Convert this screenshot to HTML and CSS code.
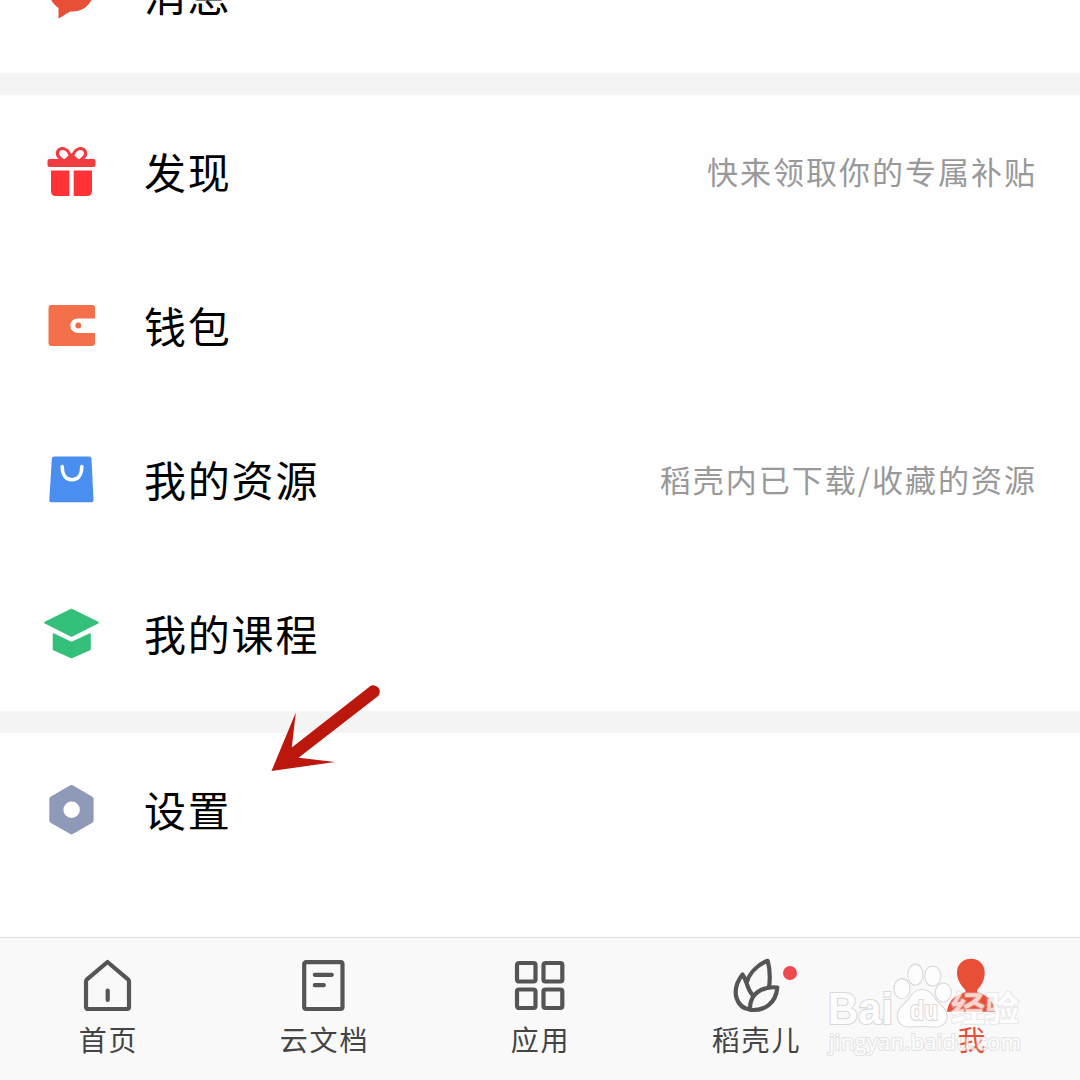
FILE: index.html
```html
<!DOCTYPE html>
<html lang="zh-CN">
<head>
<meta charset="utf-8">
<title>我</title>
<link rel="stylesheet" href="styles.css">
</head>
<body>
<div class="screen">
  <main class="content">
    <section class="group group-top">
      <div class="row">
        <svg class="row-icon" viewBox="0 0 60 60"><path fill="#e94f37" d="M29.500 0C16 0 6.500 9 6.500 22c0 9 3.500 15.500 10 20v10.500c4-1.500 7-5 12-7C42 46.500 52.500 36 52.500 22 52.500 9 43 0 29.500 0z"/></svg>
        <span class="row-label">消息</span>
      </div>
    </section>
    <section class="group">
      <div class="row">
        <svg class="row-icon" viewBox="0 0 60 60">
          <g fill="none" stroke="#f03c3e" stroke-width="3.200" stroke-linejoin="round"><path d="M29.500 17C28 11 24.500 6.500 20.500 6.500c-4.500 0-6.500 4.500-4 8 1 1.500 2.500 2.500 4 3.500M29.500 17C31 11 34.500 6.500 38.500 6.500c4.500 0 6.500 4.500 4 8-1 1.500-2.500 2.500-4 3.500M24 18l5.500-5 5.500 5"/></g>
          <rect x="5.500" y="17" width="48" height="8" rx="2" fill="#f03c3e"/>
          <path fill="#ff3335" d="M9 28.500h18.300V54H13.500a4.500 4.500 0 0 1-4.500-4.500zM31.700 28.500H50v21a4.500 4.500 0 0 1-4.500 4.500H31.700z"/>
        </svg>
        <span class="row-label">发现</span>
        <span class="row-hint">快来领取你的专属补贴</span>
      </div>
      <div class="row">
        <svg class="row-icon" viewBox="0 0 60 60"><path fill="#f4704a" d="M9.500 9h41a2.500 2.500 0 0 1 2.500 3v10.500H35.500a7.200 7.200 0 0 0 0 14.400H53V47a3 3 0 0 1-2.500 3h-41a3 3 0 0 1-3-3V12a3 3 0 0 1 3-3z"/><circle cx="36.300" cy="29.500" r="2.900" fill="#ee6a45"/></svg>
        <span class="row-label">钱包</span>
      </div>
      <div class="row">
        <svg class="row-icon" viewBox="0 0 60 60"><path fill="#4a8ff0" d="M12.500 6.500h34.500a2.500 2.500 0 0 1 2.500 2.500l2 41a2 2 0 0 1-2 2.200H9.300a2 2 0 0 1-2-2.200l2.500-41a2.500 2.500 0 0 1 2.700-2.500z"/><path fill="none" stroke="#fff" stroke-width="3.500" stroke-linecap="round" d="M20.200 16.500c0 8 3.500 13.300 9.800 13.300s9.800-5.300 9.800-13.300"/></svg>
        <span class="row-label">我的资源</span>
        <span class="row-hint">稻壳内已下载/收藏的资源</span>
      </div>
      <div class="row">
        <svg class="row-icon" viewBox="0 0 60 60"><g fill="#34c07b" stroke="#34c07b" stroke-linejoin="round" stroke-width="2"><path d="M29.500 5.700L3.200 18.700l26.300 13.100 26.300-13.100z"/><path d="M11.700 30.300L29.500 39l18.300-8.700v15L29.500 53.300 11.700 45.300z"/></g></svg>
        <span class="row-label">我的课程</span>
      </div>
    </section>
    <section class="group">
      <div class="row">
        <svg class="row-icon" viewBox="0 0 60 60"><path fill="#8f9ab8" stroke="#8f9ab8" stroke-width="5" stroke-linejoin="round" d="M29.500 7.500l19.600 11.300v21.800L29.500 51.900 9.800 40.600V18.800z"/><circle cx="29.600" cy="29.700" r="8.200" fill="#fff"/></svg>
        <span class="row-label">设置</span>
      </div>
    </section>
  </main>

  <nav class="tabbar">
    <a class="tab">
      <svg class="tab-icon" viewBox="0 0 60 60"><path d="M8 25.500a3 3 0 0 1 1-2.200L29.500 6 50 23.300a3 3 0 0 1 1 2.200V51a2 2 0 0 1-2 2H10a2 2 0 0 1-2-2zM29.700 34.500v9.500"/></svg>
      <span class="tab-label">首页</span>
    </a>
    <a class="tab">
      <svg class="tab-icon" viewBox="0 0 60 60"><rect x="10.200" y="6.200" width="38.300" height="46.800" rx="2"/><path d="M20.800 18.800h17M20.800 29.200h9"/></svg>
      <span class="tab-label">云文档</span>
    </a>
    <a class="tab">
      <svg class="tab-icon" viewBox="0 0 60 60"><rect x="7" y="7" width="18.500" height="18.500" rx="2"/><rect x="33.500" y="7" width="18.800" height="18.500" rx="2"/><rect x="7" y="33.500" width="18.500" height="18.500" rx="2"/><rect x="33.500" y="33.500" width="18.800" height="18.500" rx="2"/></svg>
      <span class="tab-label">应用</span>
    </a>
    <a class="tab">
      <svg class="tab-icon" viewBox="0 0 60 60"><path d="M43 31.500C44.300 22 44 13 41.700 4.800 32 8.500 23.500 16.500 20.500 27c1.500 5 3.500 9 6 12M20.500 27c-1-3.500-2.200-6-4-8.500-5 6.500-8.500 15.500-5.800 24 2.200 6.800 7.500 10.300 13.300 11.300 14.500 1.500 26-6.500 27.300-22.300C38.500 30 27.500 36 24.800 46c-.7 2.500-.8 5-.8 7.500"/></svg>
      <span class="badge"></span>
      <span class="tab-label">稻壳儿</span>
    </a>
    <a class="tab tab-active">
      <svg class="tab-icon" viewBox="0 0 60 60"><path d="M29 2.700c-8.200 0-14 5.800-14 14 0 7.500 4.500 13 8.500 17.500v1.800c-6 2-10.500 4-13.500 7.500-2.500 3-4.500 7.500-5 12.300h48c-.5-4.800-2.500-9.300-5-12.300-3-3.500-7-5.500-13-7.500v-1.800c4-4.500 7.700-10 7.700-17.500 0-8.200-5.500-14-13.700-14z"/></svg>
      <span class="tab-label">我</span>
    </a>
  </nav>

  <svg class="pointer" viewBox="0 0 120 100"><path fill="#bb170d" d="M6.500 91L30.800 32.500 26.800 67.500 104.500 6.800a6.200 6.200 0 0 1 8 9.700L33.500 77.800 70 82z"/></svg>

  <svg class="watermark" viewBox="820 955 210 110">
    <g class="wm-shape">
      <text class="wm-brand" x="828" y="1024" textLength="65" lengthAdjust="spacingAndGlyphs">Bai</text>
      <ellipse cx="902" cy="988.700" rx="7.500" ry="9.500"/>
      <ellipse cx="915.400" cy="974.700" rx="7" ry="10"/>
      <ellipse cx="932.700" cy="976" rx="7.500" ry="9.500"/>
      <ellipse cx="943.300" cy="992.500" rx="7.500" ry="9"/>
      <path d="M922 990c-6 0-9 3-12 8-4 6-12 9-12 18 0 8 6 11 13 10.500 8-.8 14-.8 22 0 8 .5 14-3 13.500-11-.5-8-8-10-12-17-3-5.500-7-8.500-12.500-8.500z"/>
      <text class="wm-du" x="910" y="1020" textLength="28" lengthAdjust="spacingAndGlyphs">du</text>
      <text class="wm-cn" x="951" y="1021">经验</text>
      <text class="wm-url" x="829" y="1050" textLength="192">jingyan.baidu.com</text>
    </g>
  </svg>
</div>
</body>
</html>
```
FILE: styles.css
```css
* {
  box-sizing: border-box;
}

body {
  margin: 0;
  background: #fefefe;
  font-family: "Noto Sans CJK SC", sans-serif;
}

.screen {
  position: relative;
  display: flex;
  flex-direction: column;
  width: 1080px;
  height: 1080px;
  overflow: hidden;
}

.content {
  flex: 1;
  min-height: 0;
  display: flex;
  flex-direction: column;
  gap: 22px;
  overflow: hidden;
  background: linear-gradient(#f4f4f4, #f4f4f4) 0 0 / 100% 733px no-repeat;
}

.group {
  flex: none;
  background: #fefefe;
}

.group-top {
  margin-top: -81px;
}

.row {
  display: flex;
  align-items: center;
  height: 154px;
  padding: 0 43px 0 42px;
}

.row-icon {
  flex: none;
  width: 60px;
  height: 60px;
}

.row-label {
  margin-left: 42px;
  padding-bottom: 3px;
  color: #000;
  font-size: 42px;
  line-height: 60px;
  letter-spacing: 1.8px;
}

.group-top .row-label {
  padding-bottom: 4px;
}

.row-hint {
  margin-left: auto;
  padding-bottom: 2px;
  color: #999;
  font-size: 31px;
  line-height: 46px;
  letter-spacing: 2px;
}

.tabbar {
  flex: none;
  display: grid;
  grid-template-columns: repeat(5, 1fr);
  height: 143px;
  border-top: 1px solid #e0e0e0;
  background: #f9f9f9;
}

.tab {
  position: relative;
  display: flex;
  flex-direction: column;
  align-items: center;
  padding-top: 18px;
  color: #444;
}

.tab-icon {
  width: 60px;
  height: 60px;
  fill: none;
  stroke: #555;
  stroke-width: 4.2;
  stroke-linecap: round;
  stroke-linejoin: round;
}

.tab-label {
  margin-top: 3px;
  margin-right: -1px;
  font-size: 28px;
  line-height: 40px;
  letter-spacing: 1.8px;
}

.tab-active {
  color: #e94f37;
}

.tab-active .tab-icon {
  fill: #e94f37;
  stroke: none;
}

.badge {
  position: absolute;
  top: 28px;
  left: 135px;
  width: 14px;
  height: 14px;
  border-radius: 50%;
  background: #f04850;
}

.pointer {
  position: absolute;
  left: 265px;
  top: 680px;
  width: 120px;
  height: 100px;
}

.watermark {
  position: absolute;
  left: 820px;
  top: 955px;
  width: 210px;
  height: 110px;
}

.wm-shape {
  fill: #fff;
  stroke: #cfcfcf;
  stroke-width: 2.2;
  paint-order: stroke;
  opacity: 0.75;
}

.wm-brand {
  font: bold 44px "Liberation Sans", sans-serif;
}

.wm-du {
  font: bold 27px "Liberation Sans", sans-serif;
}

.wm-cn {
  font: bold 34px "Noto Sans CJK SC", sans-serif;
  stroke-opacity: 0.5;
}

.wm-url {
  font: 22px "Open Sans", sans-serif;
  stroke-opacity: 0.7;
}
```
